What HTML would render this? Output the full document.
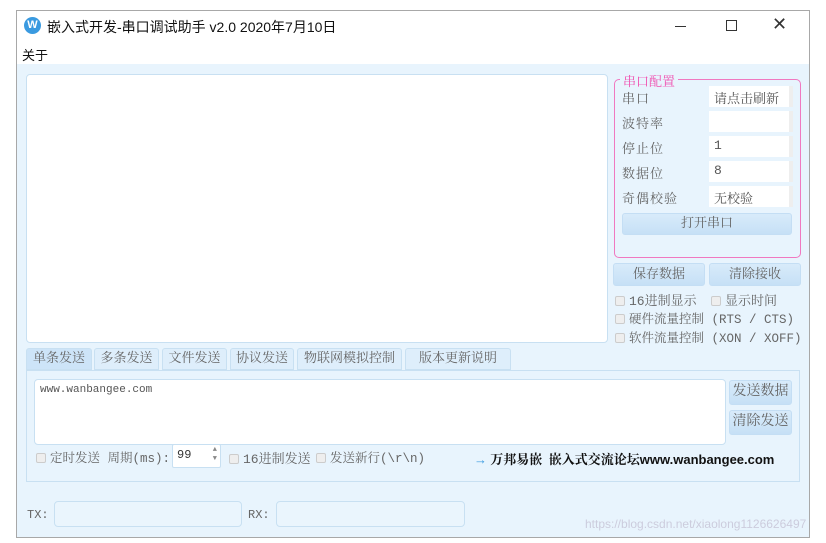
<!DOCTYPE html>
<html><head><meta charset="utf-8"><style>
*{margin:0;padding:0;box-sizing:border-box}
body{width:826px;height:543px;background:#fff;position:relative;overflow:hidden;font-family:"Liberation Mono","Noto Serif CJK SC","WenQuanYi Zen Hei",serif;font-size:13px;color:#666}
.a{position:absolute}
.win{left:16px;top:10px;width:794px;height:528px;border:1px solid #a8a8a8;background:#fff}
.ui{font-family:"Liberation Sans","Noto Sans CJK SC",sans-serif;color:#111}
.content{left:17px;top:64px;width:792px;height:473px;background:#e8f4fd}
.box{background:#fff;border:1px solid #c8e0f2;border-radius:4px}
.btn{background:linear-gradient(#d8ebfa,#c6e0f6);border:1px solid #c4def4;border-radius:3px;text-align:center;color:#666;font-size:13px}
.sel{background:#fff;height:21px;width:84px;left:709px;font-size:13px;padding:2px 5px;color:#555;border-right:4px solid #eee}
.lbl{left:622px;font-size:13px;color:#666;letter-spacing:1px}
.cb{display:inline-block;width:10px;height:10px;border:1px solid #ccc;background:#eee;border-radius:2px;margin-right:4px;vertical-align:-1px}
.tab{top:348px;height:22px;background:#deeefb;border:1px solid #c8e0f2;border-radius:3px 3px 0 0;font-size:13px;text-align:center;line-height:20px;color:#666}
</style></head><body>
<div class="a win"></div>
<div class="a ui" style="left:24px;top:17px;width:17px;height:17px;border-radius:50%;background:#3a9ae0;color:#fff;font-size:11px;font-weight:bold;text-align:center;line-height:17px">W</div>
<div class="a ui" style="left:47px;top:17px;font-size:14px">嵌入式开发-串口调试助手 v2.0 2020年7月10日</div>
<div class="a" style="left:675px;top:26px;width:11px;height:1px;background:#333"></div>
<div class="a" style="left:726px;top:20px;width:11px;height:11px;border:1px solid #333"></div>
<div class="a ui" style="left:772px;top:14px;font-size:18px;color:#333;font-weight:300">✕</div>
<div class="a ui" style="left:22px;top:45px;font-size:13px">关于</div>
<div class="a content"></div>
<div class="a box" style="left:26px;top:74px;width:582px;height:269px"></div>
<div class="a" style="left:614px;top:79px;width:187px;height:179px;border:1px solid #f078c0;border-radius:5px"></div>
<div class="a" style="left:620px;top:71px;background:#e8f4fd;color:#f050b0;padding:0 3px;font-size:13px">串口配置</div>
<div class="a lbl" style="top:88px">串口</div><div class="a sel" style="top:86px">请点击刷新</div>
<div class="a lbl" style="top:113px">波特率</div><div class="a sel" style="top:111px"></div>
<div class="a lbl" style="top:138px">停止位</div><div class="a sel" style="top:136px">1</div>
<div class="a lbl" style="top:163px">数据位</div><div class="a sel" style="top:161px">8</div>
<div class="a lbl" style="top:188px">奇偶校验</div><div class="a sel" style="top:186px">无校验</div>
<div class="a btn" style="left:622px;top:213px;width:170px;height:22px;line-height:20px">打开串口</div>
<div class="a btn" style="left:613px;top:263px;width:92px;height:23px;line-height:21px">保存数据</div>
<div class="a btn" style="left:709px;top:263px;width:92px;height:23px;line-height:21px">清除接收</div>
<div class="a" style="left:615px;top:290px"><span class="cb"></span>16进制显示</div>
<div class="a" style="left:711px;top:290px"><span class="cb"></span>显示时间</div>
<div class="a" style="left:615px;top:309px;font-size:12.5px"><span class="cb"></span>硬件流量控制 (RTS / CTS)</div>
<div class="a" style="left:615px;top:328px;font-size:12.5px"><span class="cb"></span>软件流量控制 (XON / XOFF)</div>
<div class="a tab" style="left:26px;width:66px;background:#cde4f8">单条发送</div>
<div class="a tab" style="left:94px;width:65px">多条发送</div>
<div class="a tab" style="left:162px;width:65px">文件发送</div>
<div class="a tab" style="left:230px;width:64px">协议发送</div>
<div class="a tab" style="left:297px;width:105px">物联网模拟控制</div>
<div class="a tab" style="left:405px;width:106px">版本更新说明</div>
<div class="a" style="left:26px;top:370px;width:774px;height:112px;border:1px solid #c8e0f2;background:#e8f4fd"></div>
<div class="a box" style="left:34px;top:379px;width:692px;height:66px;font-size:11px;padding:4px 5px;color:#555">www.wanbangee.com</div>
<div class="a btn" style="left:729px;top:380px;width:63px;height:25px;line-height:23px;font-size:14px">发送数据</div>
<div class="a btn" style="left:729px;top:410px;width:63px;height:25px;line-height:23px;font-size:14px">清除发送</div>
<div class="a" style="left:36px;top:448px;font-size:12.5px"><span class="cb"></span>定时发送 周期(ms):</div>
<div class="a box" style="left:172px;top:444px;width:49px;height:24px;font-size:12px;color:#333;padding:3px 4px;border-radius:2px">99<span style="position:absolute;right:3px;top:1px;font-size:7px;line-height:9px;color:#888">▲<br>▼</span></div>
<div class="a" style="left:229px;top:448px"><span class="cb"></span>16进制发送</div>
<div class="a" style="left:316px;top:448px;font-size:12.5px"><span class="cb"></span>发送新行(\r\n)</div>
<div class="a" style="left:474px;top:449px;color:#111;font-weight:bold;font-size:13px;font-family:'Liberation Serif','Noto Serif CJK SC',serif"><span style="color:#3a9ae0">→</span> 万邦易嵌&nbsp; 嵌入式交流论坛<span style="font-family:'Liberation Sans',sans-serif">www.wanbangee.com</span></div>
<div class="a" style="left:27px;top:508px;font-size:12px">TX:</div>
<div class="a box" style="left:54px;top:501px;width:188px;height:26px;background:#eaf5fd"></div>
<div class="a" style="left:248px;top:508px;font-size:12px">RX:</div>
<div class="a box" style="left:276px;top:501px;width:189px;height:26px;background:#eaf5fd"></div>
<div class="a" style="left:585px;top:517px;font-size:12px;color:#ccd;font-family:'Liberation Sans',sans-serif">https://blog.csdn.net/xiaolong1126626497</div>
</body></html>
